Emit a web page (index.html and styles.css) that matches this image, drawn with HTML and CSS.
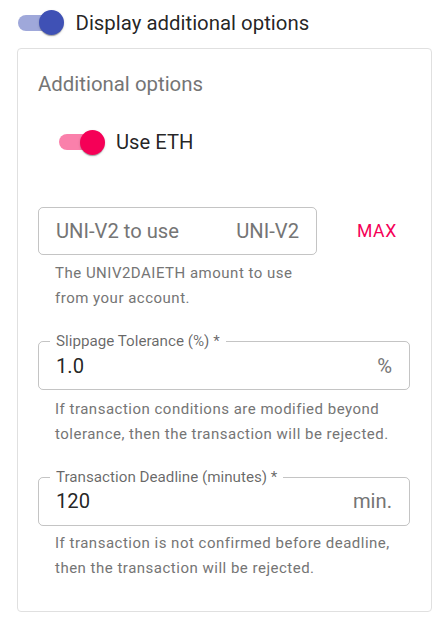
FILE: index.html
```html
<!DOCTYPE html>
<html>
<head>
<meta charset="utf-8">
<link rel="stylesheet" href="styles.css">
</head>
<body>
<div class="top-row">
  <span class="switch switch-primary"><span class="track"></span><span class="thumb"></span></span>
  <span class="top-label">Display additional options</span>
</div>
<div class="card">
  <div class="title">Additional options</div>
  <div class="eth-row">
    <span class="switch switch-secondary"><span class="track"></span><span class="thumb"></span></span>
    <span class="eth-label">Use ETH</span>
  </div>
  <div class="amount-row">
    <div class="field field-amount">
      <span class="placeholder">UNI-V2 to use</span>
      <span class="adorn">UNI-V2</span>
    </div>
    <span class="max">MAX</span>
  </div>
  <div class="helper helper-amount">The UNIV2DAIETH amount to use<br>from your account.</div>
  <div class="field field-labeled field-slippage">
    <span class="float-label">Slippage Tolerance (%) *</span>
    <span class="value">1.0</span>
    <span class="adorn">%</span>
  </div>
  <div class="helper helper-slippage">If transaction conditions are modified beyond<br>tolerance, then the transaction will be rejected.</div>
  <div class="field field-labeled field-deadline">
    <span class="float-label">Transaction Deadline (minutes) *</span>
    <span class="value">120</span>
    <span class="adorn">min.</span>
  </div>
  <div class="helper helper-deadline">If transaction is not confirmed before deadline,<br>then the transaction will be rejected.</div>
</div>
</body>
</html>
```
FILE: styles.css
```css
html, body {
  margin: 0;
  padding: 0;
  background: #ffffff;
}
body {
  font-family: Roboto, "Liberation Sans", sans-serif;
  color: rgba(0, 0, 0, 0.87);
}
.top-row {
  display: flex;
  align-items: center;
  height: 45px;
  padding-left: 17.5px;
}
.switch {
  position: relative;
  display: inline-block;
  width: 46px;
  height: 25px;
  flex: none;
}
.switch .track {
  position: absolute;
  left: 0;
  top: 4.5px;
  width: 41px;
  height: 16px;
  border-radius: 8px;
}
.switch .thumb {
  position: absolute;
  left: 21px;
  top: 0;
  width: 25px;
  height: 25px;
  border-radius: 50%;
  box-shadow: 0 2px 1px -1px rgba(0,0,0,0.2), 0 1px 1px 0 rgba(0,0,0,0.14), 0 1px 3px 0 rgba(0,0,0,0.12);
}
.switch-primary .track { background: #9fa8da; }
.switch-primary .thumb { background: #3f51b5; }
.switch-secondary .track { background: #fa80ab; }
.switch-secondary .thumb { background: #f50057; }
.top-label {
  margin-left: 12px;
  font-size: 20.4px;
  line-height: 24px;
}
.card {
  margin: 3px 0 0 17px;
  width: 415px;
  box-sizing: border-box;
  border: 1px solid #e0e0e0;
  border-radius: 4px;
  padding: 23px 20px 30px 20px;
}
.title {
  font-size: 20.4px;
  line-height: 24px;
  color: #757575;
}
.eth-row {
  display: flex;
  align-items: center;
  height: 46px;
  margin-top: 23px;
  padding-left: 21px;
}
.eth-label {
  margin-left: 11px;
  font-size: 20.2px;
  line-height: 24px;
}
.amount-row {
  display: flex;
  align-items: center;
  margin-top: 42px;
}
.field {
  position: relative;
  display: flex;
  align-items: center;
  justify-content: space-between;
  box-sizing: border-box;
  border: 1px solid rgba(0, 0, 0, 0.23);
  border-radius: 5px;
  padding: 0 17px 0 17px;
  font-size: 20.2px;
  line-height: 24px;
}
.field-amount {
  width: 279px;
  height: 48px;
}
.placeholder {
  color: #757575;
}
.adorn {
  color: #757575;
}
.max {
  margin-left: 40px;
  font-size: 17.6px;
  font-weight: 400;
  letter-spacing: 0.6px;
  color: #f50057;
}
.helper {
  margin: 5.5px 0 0 17px;
  font-size: 15px;
  line-height: 25px;
  letter-spacing: 0.0333em;
  color: #757575;
  white-space: nowrap;
}
.field-labeled {
  width: 372px;
  height: 49px;
}
.field-slippage { margin-top: 30.5px; }
.field-deadline { margin-top: 30px; }
.helper-slippage { margin-top: 6.5px; }
.helper-deadline { margin-top: 5.5px; }
.float-label {
  position: absolute;
  left: 11px;
  top: -10px;
  padding: 0 6px;
  background: #ffffff;
  font-size: 15.2px;
  line-height: 19px;
  color: rgba(0, 0, 0, 0.6);
}
.value {
  color: rgba(0, 0, 0, 0.87);
}
```
